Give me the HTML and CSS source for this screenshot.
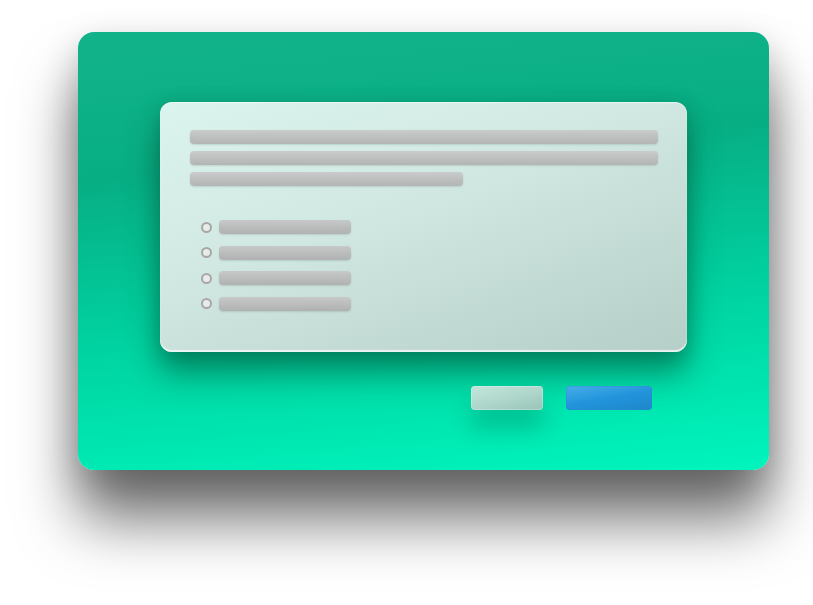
FILE: index.html
```html
<!DOCTYPE html>
<html>
<head>
<meta charset="utf-8">
<link rel="stylesheet" href="styles.css">
</head>
<body>
<div class="stage">
  <div class="card">
    <div class="dialog">
      <div class="text-lines">
        <div class="line full"></div>
        <div class="line full"></div>
        <div class="line short"></div>
      </div>
      <div class="options">
        <div class="option"><span class="radio"></span><span class="bar"></span></div>
        <div class="option"><span class="radio"></span><span class="bar"></span></div>
        <div class="option"><span class="radio"></span><span class="bar"></span></div>
        <div class="option"><span class="radio"></span><span class="bar"></span></div>
      </div>
    </div>
    <div class="actions">
      <div class="btn secondary"></div>
      <div class="btn primary"></div>
    </div>
  </div>
</div>
</body>
</html>
```
FILE: styles.css
```css
html, body {
  margin: 0;
  padding: 0;
  background: #ffffff;
  font-family: "Liberation Sans", Arial, sans-serif;
}
.stage {
  width: 813px;
  height: 605px;
  padding: 32px 0 0 78px;
  box-sizing: border-box;
  overflow: hidden;
}
.card {
  width: 691px;
  height: 438px;
  border-radius: 16px;
  background: linear-gradient(175deg, #13b38a 0%, #07ae84 30%, #00d4a2 65%, #00f5bd 100%);
  box-shadow: 0 50px 60px rgba(0, 0, 0, 0.55), 0 12px 36px rgba(0, 0, 0, 0.2);
  padding: 70px 0 0 82px;
  box-sizing: border-box;
  display: flex;
  flex-direction: column;
}
.dialog {
  width: 527px;
  height: 250px;
  border-radius: 12px;
  background: linear-gradient(160deg, #dbf4ed 0%, #d2e9e3 40%, #b6cec8 100%);
  box-shadow: 0 22px 32px rgba(0, 70, 45, 0.5), 0 4px 18px rgba(0, 70, 45, 0.25), inset 0 -2px 1px rgba(255, 255, 255, 0.7), inset 0 1px 1px rgba(255,255,255,0.5);
  padding: 28px 29px 0 30px;
  box-sizing: border-box;
}
.text-lines {
  display: flex;
  flex-direction: column;
  gap: 7px;
}
.line {
  height: 14px;
  border-radius: 4px;
  background: linear-gradient(180deg, #cacccb 0%, #bec0bf 50%, #b3b5b4 100%);
  box-shadow: 0 1px 2px rgba(0, 0, 0, 0.12);
}
.line.full { width: 468px; }
.line.short { width: 273px; }
.options {
  margin-top: 34px;
  padding-left: 11px;
  display: flex;
  flex-direction: column;
  gap: 11.5px;
}
.option {
  display: flex;
  align-items: center;
  gap: 7px;
  height: 14px;
}
.radio {
  width: 7px;
  height: 7px;
  border-radius: 50%;
  border: 2px solid #aaa6a6;
  background: #e6ecea;
  box-sizing: content-box;
}
.bar {
  width: 132px;
  height: 14px;
  border-radius: 4px;
  background: linear-gradient(180deg, #c6c9c8 0%, #babdbc 50%, #afb2b1 100%);
  box-shadow: 0 1px 2px rgba(0, 0, 0, 0.12);
}
.actions {
  margin-top: 34px;
  margin-left: 311px;
  display: flex;
  gap: 23px;
}
.btn {
  height: 24px;
  border-radius: 4px;
}
.btn.secondary {
  width: 72px;
  background: linear-gradient(165deg, #c3e6dc 0%, #b0d7cc 50%, #98c4b6 100%);
  box-shadow: 0 18px 22px rgba(0, 100, 70, 0.3), inset 0 0 0 1px rgba(255,255,255,0.25);
}
.btn.primary {
  width: 86px;
  background: linear-gradient(170deg, #48aee8 0%, #2294dc 50%, #1f86c8 100%);
  box-shadow: inset 0 0 0 1px rgba(40, 140, 210, 0.4);
}
```
